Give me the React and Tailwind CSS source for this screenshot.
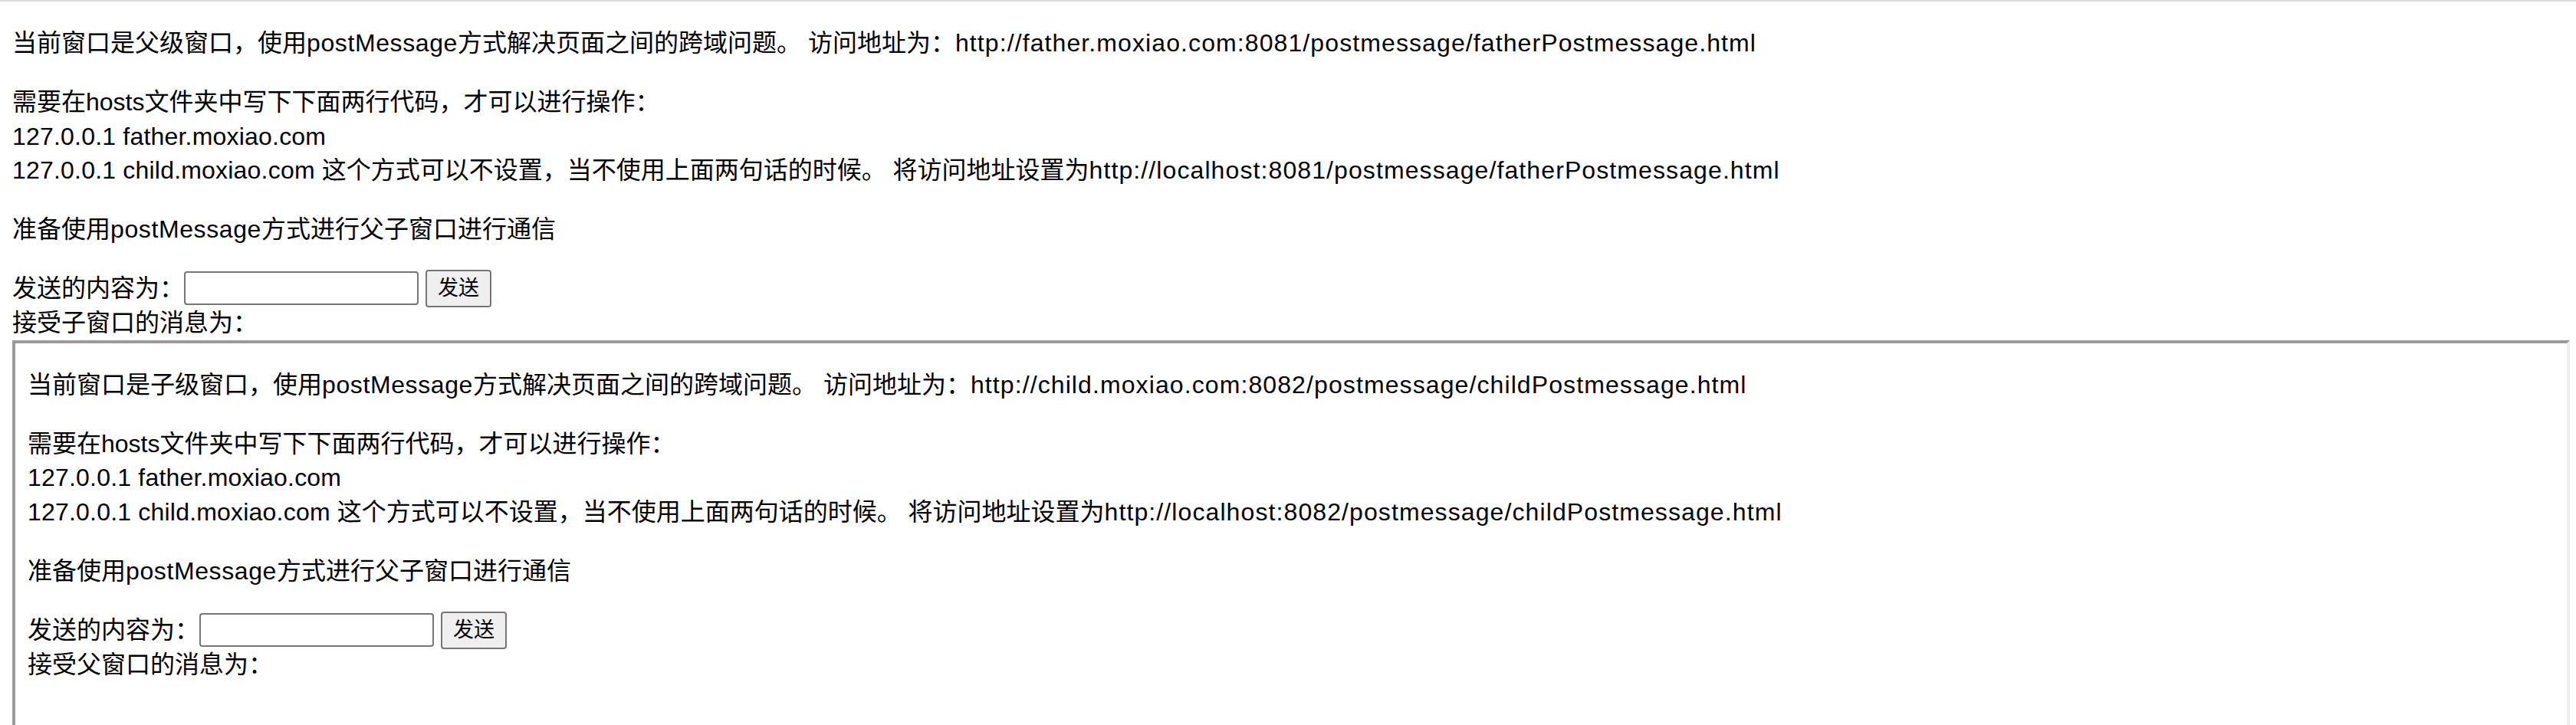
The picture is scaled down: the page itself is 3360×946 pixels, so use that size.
import React from "react";

function Url({ children }) {
  return <span className="tracking-[1.1px]">{children}</span>;
}

function PM() {
  return <span className="tracking-[0.6px]">postMessage</span>;
}

function SendRow({ label }) {
  return (
    <>
      <div className="flex h-[45px] items-center">
        <span>发送的内容为：</span>
        <input
          type="text"
          className="box-border h-[44px] w-[306px] rounded-[4px] border-2 border-[#767676] bg-white px-[4px] text-[27px] outline-none"
        />
        <button
          type="button"
          className="ml-[9px] box-border h-[49px] w-[86px] rounded-[4px] border-2 border-[#767676] bg-[#efefef] text-[27px] leading-[37px] text-black"
        >
          发送
        </button>
      </div>
      <div>{label}</div>
    </>
  );
}

function PageBody({ who, url, port, file, label }) {
  return (
    <>
      <p className="my-8">
        当前窗口是{who}级窗口，使用<PM />方式解决页面之间的跨域问题。 访问地址为：
        <Url>{url}</Url>
      </p>
      <p className="my-8">
        需要在hosts文件夹中写下下面两行代码，才可以进行操作：
        <br />
        <span className="tracking-[0.2px]">127.0.0.1 father.moxiao.com</span>
        <br />
        <span className="tracking-[0.2px]">127.0.0.1 child.moxiao.com</span> 这个方式可以不设置，当不使用上面两句话的时候。 将访问地址设置为
        <Url>{`http://localhost:${port}/postmessage/${file}`}</Url>
      </p>
      <p className="my-8">
        准备使用<PM />方式进行父子窗口进行通信
      </p>
      <SendRow label={label} />
    </>
  );
}

export default function App() {
  return (
    <div className="h-[946px] overflow-hidden bg-white font-['Liberation_Sans','Noto_Sans_CJK_SC',sans-serif] text-[32px] leading-[44.8px] text-black">
      <div className="h-[2px] bg-[#dcdcdc]" />
      <div className="px-4">
        <PageBody
          who="父"
          url="http://father.moxiao.com:8081/postmessage/fatherPostmessage.html"
          port="8081"
          file="fatherPostmessage.html"
          label="接受子窗口的消息为："
        />
        <div className="h-[700px] w-[3336px] border-4 border-t-[#9a9a9a] border-r-[#ececec] border-b-[#ececec] border-l-[#9a9a9a] bg-white">
          <div className="px-4">
            <PageBody
              who="子"
              url="http://child.moxiao.com:8082/postmessage/childPostmessage.html"
              port="8082"
              file="childPostmessage.html"
              label="接受父窗口的消息为："
            />
          </div>
        </div>
      </div>
    </div>
  );
}
